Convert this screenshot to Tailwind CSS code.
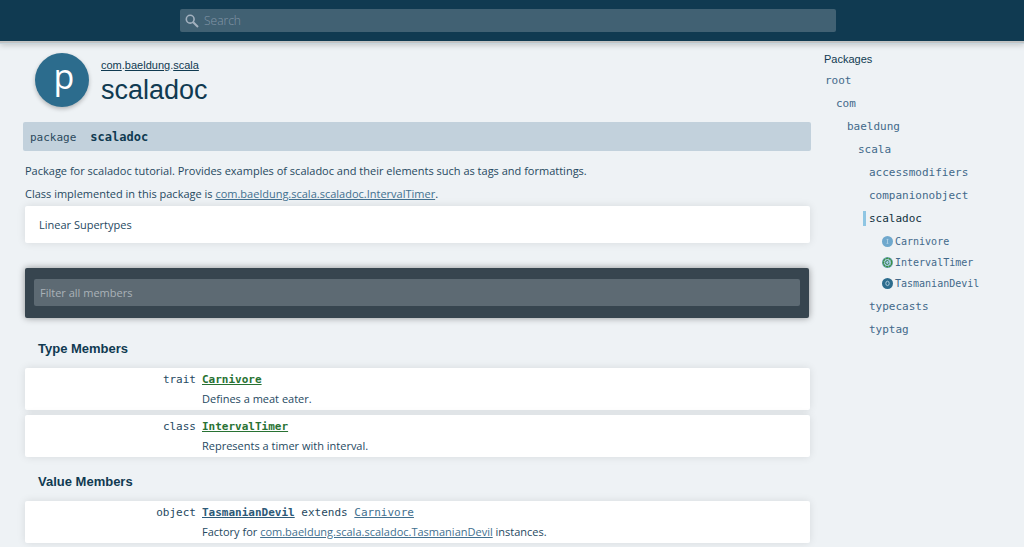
<!DOCTYPE html>
<html lang="en">
<head>
    <meta charset="UTF-8">
    <meta name="viewport" content="width=device-width, initial-scale=1.0">
    <title>com.baeldung.scala.scaladoc</title>
    <!-- Tailwind CSS CDN -->
    <script src="https://cdn.jsdelivr.net/npm/@tailwindcss/browser@4"></script>
</head>
<body class="min-h-screen bg-[#eef2f5] text-[#26495f] font-['Open_Sans',sans-serif] text-[11px] leading-[23px]">

    <!-- Search bar -->
    <header class="relative h-[41px] bg-[#103a51] shadow-[0_2px_0_#c2c3c3,0_3px_0_#c8d6de,0_4px_6px_rgba(0,0,0,0.2)] flex items-center pl-[180px] pr-[188px]">
        <form class="w-full h-[23px] rounded-xs bg-[#416173] flex items-center">
            <label for="search" class="px-[5px]" aria-label="Search">
                <svg class="w-[14px] h-[14px] text-[#a3b1bf]" viewBox="0 0 14 14" fill="none" stroke="currentColor">
                    <circle cx="5.2" cy="5.2" r="3.9" stroke-width="1.6" />
                    <path d="M8.2 8.2L13 13" stroke-width="2" />
                </svg>
            </label>
            <input id="search" type="text" placeholder="Search" class="flex-1 h-full bg-transparent outline-none font-light text-[12px] text-white placeholder:text-[#8497a8]">
        </form>
    </header>

    <div class="flex">
        <main class="flex-1 min-w-0 pl-[23px] pr-[13px] pt-3">

            <!-- Package title -->
            <div class="flex items-center pl-3 gap-3 font-['Liberation_Sans',Arial,sans-serif]">
                <div class="w-[54px] h-[54px] rounded-full bg-[#2c6c8d] shadow-[0_2px_4px_rgba(0,0,0,0.25)] flex justify-center pl-1 font-['Open_Sans',sans-serif] text-[34px] leading-[46px] text-white">p</div>
                <div class="pt-[3px]">
                    <p class="text-[11px] leading-4 text-[#103a51]"><a href="#" class="underline">com</a>.<a href="#" class="underline">baeldung</a>.<a href="#" class="underline">scala</a></p>
                    <h1 class="text-[27px] leading-[34px] text-[#103a51]">scaladoc</h1>
                </div>
            </div>

            <!-- Signature -->
            <div class="mt-[15px] h-[29px] rounded-xs bg-[#c2d1dc] px-[7px] pt-px flex items-center gap-[14px] font-['DejaVu_Sans_Mono',monospace] text-[11px] text-[#2c4a5e]">
                <span>package</span>
                <span class="font-bold text-[12px] text-[#103a51]">scaladoc</span>
            </div>

            <div class="pl-[2px] pr-px">
                <!-- Description -->
                <div class="pt-2">
                    <p>Package for scaladoc tutorial. Provides examples of scaladoc and their elements such as tags and formattings.</p>
                    <p>Class implemented in this package is <a href="#" class="underline text-[#42708f]">com.baeldung.scala.scaladoc.IntervalTimer</a>.</p>
                </div>
                <div class="mt-px h-[37px] rounded-xs bg-white shadow-[0_0_8px_rgba(0,0,0,0.1)] px-[14px] flex items-center">Linear Supertypes</div>

                <!-- Member filter -->
                <div class="mt-[25px] mr-px h-[50px] rounded-xs bg-[#37454f] shadow-[0_0_7px_rgba(0,0,0,0.4)] px-[9px] pt-[11px]">
                    <input type="text" aria-label="Filter all members" placeholder="Filter all members" class="block w-full h-[27px] rounded-xs bg-[#5d6a73] px-[6px] outline-none text-white placeholder:text-[#aab2b8]">
                </div>

                <!-- Members -->
                <section>
                    <h2 class="mt-[19px] pl-[13px] font-['Liberation_Sans',Arial,sans-serif] text-[13px] font-bold text-[#103a51]">Type Members</h2>
                    <ol class="mt-2 flex flex-col gap-[5px]">
                        <li class="h-[42px] rounded-xs bg-white shadow-[0_0_8px_rgba(0,0,0,0.1)] grid grid-cols-[171px_1fr] gap-x-[6px] content-center leading-[19px]">
                            <span class="text-right font-['DejaVu_Sans_Mono',monospace]">trait</span>
                            <span class="font-['DejaVu_Sans_Mono',monospace]"><a href="#" class="font-bold underline text-[#287233]">Carnivore</a></span>
                            <p class="col-start-2">Defines a meat eater.</p>
                        </li>
                        <li class="h-[42px] rounded-xs bg-white shadow-[0_0_8px_rgba(0,0,0,0.1)] grid grid-cols-[171px_1fr] gap-x-[6px] content-center leading-[19px]">
                            <span class="text-right font-['DejaVu_Sans_Mono',monospace]">class</span>
                            <span class="font-['DejaVu_Sans_Mono',monospace]"><a href="#" class="font-bold underline text-[#287233]">IntervalTimer</a></span>
                            <p class="col-start-2">Represents a timer with interval.</p>
                        </li>
                    </ol>
                </section>
                <section>
                    <h2 class="mt-[13px] pl-[13px] font-['Liberation_Sans',Arial,sans-serif] text-[13px] font-bold text-[#103a51]">Value Members</h2>
                    <ol class="mt-2 flex flex-col gap-[5px]">
                        <li class="h-[42px] rounded-xs bg-white shadow-[0_0_8px_rgba(0,0,0,0.1)] grid grid-cols-[171px_1fr] gap-x-[6px] content-center leading-[19px]">
                            <span class="text-right font-['DejaVu_Sans_Mono',monospace]">object</span>
                            <span class="font-['DejaVu_Sans_Mono',monospace]"><a href="#" class="font-bold underline text-[#2c5a78]">TasmanianDevil</a> extends <a href="#" class="underline text-[#42708f]">Carnivore</a></span>
                            <p class="col-start-2">Factory for <a href="#" class="underline text-[#42708f]">com.baeldung.scala.scaladoc.TasmanianDevil</a> instances.</p>
                        </li>
                    </ol>
                </section>
            </div>
        </main>

        <!-- Package tree -->
        <nav class="w-[200px] pt-[10px] font-['DejaVu_Sans_Mono',monospace] text-[#42698a]">
            <h3 class="pb-[2px] leading-4 font-['Liberation_Sans',Arial,sans-serif] text-[#103a51]">Packages</h3>
            <ul class="pl-px">
                <li><a href="#">root</a>
                    <ul class="pl-[11px]">
                        <li><a href="#">com</a>
                            <ul class="pl-[11px]">
                                <li><a href="#">baeldung</a>
                                    <ul class="pl-[11px]">
                                        <li><a href="#">scala</a>
                                            <ul class="pl-[11px]">
                                                <li><a href="#">accessmodifiers</a></li>
                                                <li><a href="#">companionobject</a></li>
                                                <li>
                                                    <a href="#" class="-ml-[6px] flex items-center gap-[3px] text-[#103040]"><span class="w-[3px] h-[15px] bg-[#8fc6e3]"></span>scaladoc</a>
                                                    <ul class="py-px pl-[13px] text-[10px] leading-[21px]">
                                                        <li><a href="#" class="flex items-center gap-[2px]">
                                                            <svg class="w-[11px] h-[11px]" viewBox="0 0 11 11" fill="none">
                                                                <circle cx="5.5" cy="5.5" r="5.5" fill="#6fa8cd" />
                                                                <path d="M5.5 3.4V7.2M4.6 3.4H6.4M4.6 7.4H6.4" stroke="#b9d8ea" stroke-width="0.8" />
                                                            </svg>
                                                            Carnivore</a></li>
                                                        <li><a href="#" class="flex items-center gap-[2px]">
                                                            <svg class="w-[11px] h-[11px]" viewBox="0 0 11 11" fill="none">
                                                                <circle cx="5.5" cy="5.5" r="5.5" fill="#6fa8c0" />
                                                                <circle cx="5.5" cy="5.5" r="4.2" fill="#a4cbe0" stroke="#3c8f3f" stroke-width="1.4" stroke-dasharray="2.4 0.5" />
                                                                <path d="M6.8 4.4A1.9 1.9 0 1 0 6.8 6.7V5.5" stroke="#2f7d4a" stroke-width="1" />
                                                            </svg>
                                                            IntervalTimer</a></li>
                                                        <li><a href="#" class="flex items-center gap-[2px]">
                                                            <svg class="w-[11px] h-[11px]" viewBox="0 0 11 11" fill="none">
                                                                <circle cx="5.5" cy="5.5" r="5.5" fill="#2c6c8d" />
                                                                <ellipse cx="5.5" cy="5.4" rx="1.7" ry="2.2" stroke="#b4d0e0" stroke-width="0.9" />
                                                            </svg>
                                                            TasmanianDevil</a></li>
                                                    </ul>
                                                </li>
                                                <li><a href="#">typecasts</a></li>
                                                <li><a href="#">typtag</a></li>
                                            </ul>
                                        </li>
                                    </ul>
                                </li>
                            </ul>
                        </li>
                    </ul>
                </li>
            </ul>
        </nav>
    </div>

</body>
</html>
